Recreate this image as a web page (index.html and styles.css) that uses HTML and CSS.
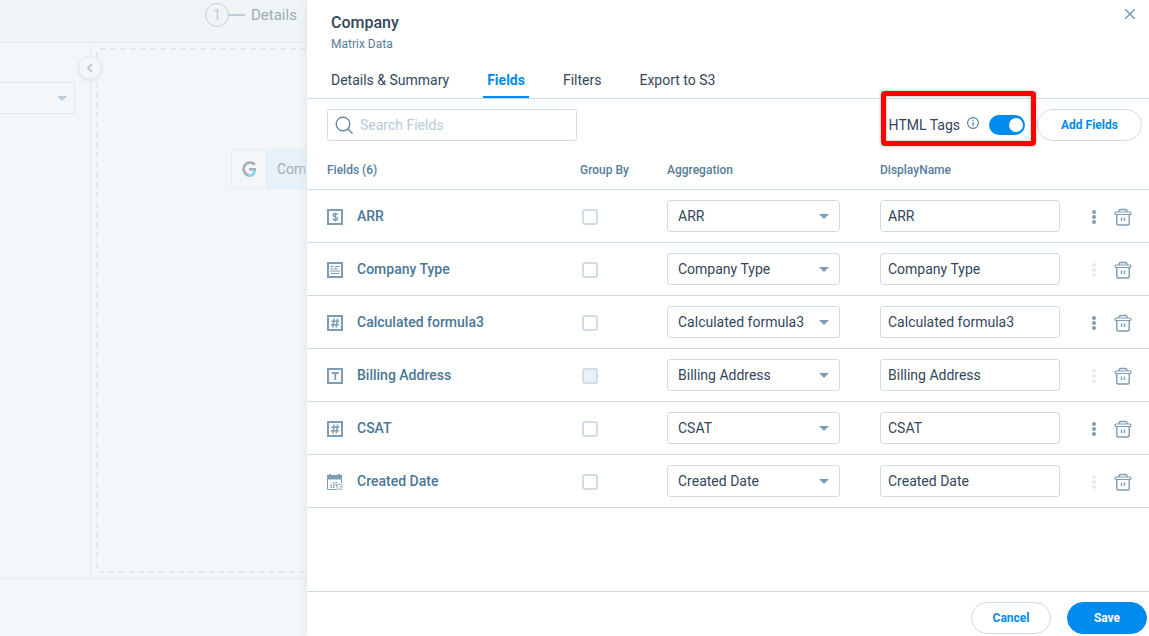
FILE: index.html
```
<!DOCTYPE html>
<html lang="en">
<head>
<meta charset="utf-8">
<meta name="viewport" content="width=device-width, initial-scale=1">
<title>Company – Matrix Data</title>
<link rel="stylesheet" href="styles.css">
</head>
<body>
<svg class="sprite" aria-hidden="true">
  <symbol id="i-frame" viewBox="0 0 16 16"><rect x="1" y="1" width="14" height="14" fill="none" stroke="currentColor" stroke-width="2"/></symbol>
  <symbol id="i-money" viewBox="0 0 16 16"><use href="#i-frame"/><path d="M10.4 6.2C10.2 5.2 9.400 4.700 8.300 4.700 7 4.700 6.100 5.300 6.100 6.300 6.100 8.500 10.600 7.300 10.600 9.600 10.600 10.700 9.600 11.300 8.300 11.300 7 11.300 6.100 10.700 6 9.600M8.300 3.400v9.200" fill="none" stroke="currentColor" stroke-width="1.400"/></symbol>
  <symbol id="i-list" viewBox="0 0 16 16"><use href="#i-frame"/><path d="M3.500 4.500h3M8 4.500h4.500M3.500 6.500h2M7 6.500h3M3.500 11.500h9" fill="none" stroke="currentColor" stroke-width="1"/><path d="M3 7.500h10v2.500H3z" fill="currentColor" opacity=".5"/></symbol>
  <symbol id="i-hash" viewBox="0 0 16 16"><use href="#i-frame"/><path d="M7.200 3.500l-1.400 9M10.600 3.500l-1.400 9M4.300 6.300h8M3.800 9.700h8" fill="none" stroke="currentColor" stroke-width="1.500"/></symbol>
  <symbol id="i-text" viewBox="0 0 16 16"><use href="#i-frame"/><path d="M4.800 5h7M8.300 5v7" fill="none" stroke="currentColor" stroke-width="1.800"/></symbol>
  <symbol id="i-date" viewBox="0 0 16 16"><path d="M0 1h2V0h2v1h7V0h2v1h2v4.500H0z" fill="currentColor"/><path d="M.5 4v11.500h9M14.500 4v5" fill="none" stroke="currentColor"/><path d="M6 8.700h1.500M8.500 8.700H10M3.500 11h1.500M6 11h1.500M8.500 11H10M3.500 13.300h1.500M6 13.300h1.500" stroke="currentColor" stroke-width="1.500"/><circle cx="12.500" cy="12.800" r="2.800" fill="#fff" stroke="currentColor" stroke-width=".9"/><path d="M12.300 13.500l1.500-1.500" fill="none" stroke="currentColor" stroke-width=".9"/></symbol>
  <symbol id="i-trash" viewBox="0 0 18 18"><path d="M4.500 4l1-1.800Q5.800 1.500 6.600 1.500h4.800q.8 0 1.100.7l1 1.800M2.800 6.500v9q0 1.500 1.500 1.500h9.400q1.500 0 1.500-1.500v-9M7.500 9.500v3.500M10.500 9.500v3.500" fill="none" stroke="currentColor" stroke-width="1.400"/><rect x="1" y="4" width="16" height="2.500" rx="1.200" fill="#fff" stroke="currentColor" stroke-width="1.200"/></symbol>
  <symbol id="i-dots" viewBox="0 0 4 14"><circle cx="2" cy="2" r="2" fill="currentColor"/><circle cx="2" cy="7" r="2" fill="currentColor"/><circle cx="2" cy="12" r="2" fill="currentColor"/></symbol>
  <symbol id="i-caret" viewBox="0 0 10 5"><path d="M0 0h10L5 5z" fill="currentColor"/></symbol>
</svg>

<div class="builder" aria-hidden="true">
  <div class="builder-head">
    <span class="step-number">1</span><span class="step-line"></span><span class="step-label">Details</span>
  </div>
  <div class="builder-body">
    <div class="side">
      <div class="side-select"><svg class="caret"><use href="#i-caret"/></svg></div>
      <span class="collapse"><svg width="6" height="10" viewBox="0 0 6 10"><path d="M5 1L1 5l4 4" fill="none" stroke="currentColor" stroke-width="1.800"/></svg></span>
    </div>
    <div class="canvas">
      <div class="node">
        <span class="node-logo"><svg width="18" height="18" viewBox="0 0 18 18"><path d="M14.800 4.600A6.500 6.500 0 1 0 9 15.500" fill="none" stroke="#a9b2b7" stroke-width="2.800"/><path d="M9 9.300h7" stroke="#a9b2b7" stroke-width="2.600"/><path d="M8 15.600c3.600.3 6.600-1 6.600-5.600" fill="none" stroke="#86d6f0" stroke-width="3"/></svg></span>
        <span class="node-name">Com</span>
      </div>
    </div>
  </div>
  <div class="builder-foot"></div>
</div>

<main class="drawer">
  <header class="drawer-head">
    <div>
      <h1 class="title">Company</h1>
      <p class="subtitle">Matrix Data</p>
    </div>
    <button class="icon-btn close" type="button" aria-label="Close"><svg width="10" height="10" viewBox="0 0 10 10"><path d="M0 0l10 10M10 0L0 10" stroke="currentColor" stroke-width="1.300"/></svg></button>
  </header>
  <nav class="tabs">
    <a class="tab" href="#details">Details &amp; Summary</a>
    <a class="tab tab-active" href="#fields" aria-current="page">Fields</a>
    <a class="tab" href="#filters">Filters</a>
    <a class="tab" href="#export">Export to S3</a>
  </nav>
  <div class="toolbar">
    <div class="search">
      <svg width="18" height="18" viewBox="0 0 18 18"><circle cx="8" cy="8" r="6.800" fill="none" stroke="currentColor" stroke-width="1.200"/><path d="M13 13l4.500 4.500" stroke="currentColor" stroke-width="1.300"/></svg>
      <input class="search-input" type="text" placeholder="Search Fields" aria-label="Search Fields">
    </div>
    <div class="toolbar-end">
      <div class="tags">
        <label for="html-tags">HTML Tags</label>
        <svg class="info" width="12" height="12" viewBox="0 0 12 12"><circle cx="6" cy="6" r="5.400" fill="none" stroke="currentColor" stroke-width="1.100"/><path d="M6 5v4M6 2.800v1.300" stroke="currentColor" stroke-width="1.200"/></svg>
        <input class="switch" id="html-tags" type="checkbox" role="switch" checked>
        <span class="highlight"></span>
      </div>
      <button class="btn btn-add" type="button">Add Fields</button>
    </div>
  </div>
  <div class="table-area">
  <table class="fields">
    <colgroup><col><col class="c-group"><col class="c-agg"><col class="c-display"><col class="c-actions"></colgroup>
    <thead><tr><th>Fields (6)</th><th>Group By</th><th>Aggregation</th><th>DisplayName</th><th aria-label="Actions"></th></tr></thead>
    <tbody>
      <tr>
        <td><span class="field"><svg class="type"><use href="#i-money"/></svg>ARR</span></td>
        <td><input class="check" type="checkbox" aria-label="Group by ARR"></td>
        <td><span class="pick"><select class="box" aria-label="Aggregation of ARR"><option>ARR</option></select><svg class="caret"><use href="#i-caret"/></svg></span></td>
        <td><input class="box name" type="text" value="ARR" aria-label="Display name of ARR"></td>
        <td><span class="actions"><button class="icon-btn" type="button" aria-label="More"><svg class="dots"><use href="#i-dots"/></svg></button><button class="icon-btn" type="button" aria-label="Delete"><svg class="trash"><use href="#i-trash"/></svg></button></span></td>
      </tr>
      <tr>
        <td><span class="field"><svg class="type"><use href="#i-list"/></svg>Company Type</span></td>
        <td><input class="check" type="checkbox" aria-label="Group by Company Type"></td>
        <td><span class="pick"><select class="box" aria-label="Aggregation of Company Type"><option>Company Type</option></select><svg class="caret"><use href="#i-caret"/></svg></span></td>
        <td><input class="box name" type="text" value="Company Type" aria-label="Display name of Company Type"></td>
        <td><span class="actions"><button class="icon-btn" type="button" aria-label="More" disabled><svg class="dots"><use href="#i-dots"/></svg></button><button class="icon-btn" type="button" aria-label="Delete"><svg class="trash"><use href="#i-trash"/></svg></button></span></td>
      </tr>
      <tr>
        <td><span class="field"><svg class="type"><use href="#i-hash"/></svg>Calculated formula3</span></td>
        <td><input class="check" type="checkbox" aria-label="Group by Calculated formula3"></td>
        <td><span class="pick"><select class="box" aria-label="Aggregation of Calculated formula3"><option>Calculated formula3</option></select><svg class="caret"><use href="#i-caret"/></svg></span></td>
        <td><input class="box name" type="text" value="Calculated formula3" aria-label="Display name of Calculated formula3"></td>
        <td><span class="actions"><button class="icon-btn" type="button" aria-label="More"><svg class="dots"><use href="#i-dots"/></svg></button><button class="icon-btn" type="button" aria-label="Delete"><svg class="trash"><use href="#i-trash"/></svg></button></span></td>
      </tr>
      <tr>
        <td><span class="field"><svg class="type"><use href="#i-text"/></svg>Billing Address</span></td>
        <td><input class="check" type="checkbox" aria-label="Group by Billing Address" disabled></td>
        <td><span class="pick"><select class="box" aria-label="Aggregation of Billing Address"><option>Billing Address</option></select><svg class="caret"><use href="#i-caret"/></svg></span></td>
        <td><input class="box name" type="text" value="Billing Address" aria-label="Display name of Billing Address"></td>
        <td><span class="actions"><button class="icon-btn" type="button" aria-label="More" disabled><svg class="dots"><use href="#i-dots"/></svg></button><button class="icon-btn" type="button" aria-label="Delete"><svg class="trash"><use href="#i-trash"/></svg></button></span></td>
      </tr>
      <tr>
        <td><span class="field"><svg class="type"><use href="#i-hash"/></svg>CSAT</span></td>
        <td><input class="check" type="checkbox" aria-label="Group by CSAT"></td>
        <td><span class="pick"><select class="box" aria-label="Aggregation of CSAT"><option>CSAT</option></select><svg class="caret"><use href="#i-caret"/></svg></span></td>
        <td><input class="box name" type="text" value="CSAT" aria-label="Display name of CSAT"></td>
        <td><span class="actions"><button class="icon-btn" type="button" aria-label="More"><svg class="dots"><use href="#i-dots"/></svg></button><button class="icon-btn" type="button" aria-label="Delete"><svg class="trash"><use href="#i-trash"/></svg></button></span></td>
      </tr>
      <tr>
        <td><span class="field"><svg class="type"><use href="#i-date"/></svg>Created Date</span></td>
        <td><input class="check" type="checkbox" aria-label="Group by Created Date"></td>
        <td><span class="pick"><select class="box" aria-label="Aggregation of Created Date"><option>Created Date</option></select><svg class="caret"><use href="#i-caret"/></svg></span></td>
        <td><input class="box name" type="text" value="Created Date" aria-label="Display name of Created Date"></td>
        <td><span class="actions"><button class="icon-btn" type="button" aria-label="More" disabled><svg class="dots"><use href="#i-dots"/></svg></button><button class="icon-btn" type="button" aria-label="Delete"><svg class="trash"><use href="#i-trash"/></svg></button></span></td>
      </tr>
    </tbody>
  </table>
  </div>
  <footer class="drawer-foot">
    <button class="btn" type="button">Cancel</button>
    <button class="btn btn-primary" type="button">Save</button>
  </footer>
</main>
</body>
</html>
```
FILE: styles.css
```
* { box-sizing: border-box; }

:root {
  --ink: #33475b;
  --muted: #557d9a;
  --icon: #7d9cb5;
  --line: #cfdde7;
  --blue: #018bef;
}

body {
  margin: 0;
  height: 100vh;
  position: relative;
  overflow: hidden;
  font: 14px/20px Roboto, sans-serif;
  color: var(--ink);
}

svg { display: block; flex: none; }
button, input, select { font: inherit; color: inherit; }
.sprite { position: absolute; width: 0; height: 0; }

/* Page behind the drawer */
.builder {
  height: 100%;
  display: flex;
  flex-direction: column;
  background: #f3f7fa;
  color: #9eacb5;
}
.builder-head {
  display: flex;
  align-items: center;
  height: 43px;
  padding: 0 0 12px 205px;
  background: #eff4f7;
  border-bottom: 1px solid #dfe7ed;
  font-size: 15px;
}
.step-number {
  width: 24px;
  height: 24px;
  border: 1px solid #c0ceda;
  border-radius: 50%;
  line-height: 22px;
  text-align: center;
  color: #c0ceda;
}
.step-line { width: 16px; height: 2px; background: #c0ceda; }
.step-label { margin-left: 6px; }
.builder-body {
  flex: 1;
  display: flex;
  border-bottom: 1px solid #e6ecf0;
}
.side {
  width: 91px;
  position: relative;
  padding-top: 39px;
  border-right: 1px solid #e6ecf0;
}
.side-select {
  display: flex;
  align-items: center;
  justify-content: flex-end;
  width: 75px;
  height: 32px;
  padding-right: 7px;
  border: 1px solid #dfe8ee;
  border-left: 0;
  border-radius: 0 3px 3px 0;
}
.collapse {
  position: absolute;
  top: 13px;
  right: -12px;
  z-index: 1;
  width: 24px;
  height: 24px;
  display: grid;
  place-items: center;
  border: 1px solid #e0e8ee;
  border-radius: 50%;
  background: #f3f7fa;
  box-shadow: 0 1px 3px #dfe7ed;
  color: #b9c8d4;
}
.side .caret { color: #b9cad8; }
.canvas {
  flex: 1;
  margin: 5px;
  padding: 99px 0 0 133px;
  border: 2px dashed #e1e9ef;
  border-radius: 4px;
}
.node {
  display: inline-flex;
  width: 180px;
  height: 40px;
  border: 1px solid #def0f8;
  border-radius: 4px;
}
.node-logo { width: 34px; display: grid; place-items: center; }
.node-name {
  flex: 1;
  padding: 0 10px;
  line-height: 38px;
  background: #e7f1f9;
  border-left: 1px solid #def0f8;
}
.builder-foot { height: 57px; }

/* Drawer */
.drawer {
  position: absolute;
  inset: 0 0 0 307px;
  display: flex;
  flex-direction: column;
  background: #fff;
  box-shadow: 0 0 10px #dbe4ea;
}
.drawer-head {
  display: flex;
  justify-content: space-between;
  align-items: flex-start;
  padding: 9px 14px 0 24px;
}
.title { margin: 4px 0 0; font-size: 16px; font-weight: 500; line-height: 20px; }
.subtitle { margin: 3px 0 0; font-size: 12px; line-height: 16px; color: var(--muted); }
.icon-btn { display: block; padding: 0; border: 0; background: none; color: var(--icon); }
.icon-btn:disabled { color: #e3ebf0; }
.close { color: #6796b8; }

.tabs {
  display: flex;
  gap: 30px;
  padding: 10px 20px 0;
  border-bottom: 1px solid var(--line);
}
.tab {
  height: 36px;
  padding: 8px 4px 0;
  border-bottom: 2px solid transparent;
  color: inherit;
  text-decoration: none;
}
.tab-active { border-color: var(--blue); color: var(--blue); font-weight: 700; }

.toolbar {
  display: flex;
  justify-content: space-between;
  padding: 10px 7px 9px 20px;
}
.search {
  display: flex;
  align-items: center;
  gap: 7px;
  width: 250px;
  height: 32px;
  padding: 0 7px;
  border: 1px solid var(--line);
  border-radius: 3px;
  color: var(--muted);
}
.search-input { width: 100%; padding: 0; border: 0; outline: 0; background: none; }
.search-input::placeholder { color: #b7cad8; opacity: 1; }
.toolbar-end { display: flex; align-items: center; gap: 12px; }
.tags { position: relative; display: flex; align-items: center; gap: 7px; }
.tags label { padding-bottom: 1px; }
.info { margin-bottom: 4px; color: var(--muted); }
.highlight {
  position: absolute;
  inset: -24px -11px -10px -8px;
  border: 5px solid #fe0000;
  border-radius: 4px;
  box-shadow: 0 0 3px #aaa, inset 0 0 3px #aaa;
  pointer-events: none;
}
.switch {
  appearance: none;
  width: 36px;
  height: 20px;
  margin: 0 0 0 3px;
  padding: 3px 2px;
  border-radius: 10px;
  background: var(--blue);
}
.switch::before {
  content: "";
  display: block;
  width: 14px;
  height: 14px;
  margin-left: auto;
  border-radius: 50%;
  background: #fff;
}

.btn {
  min-width: 80px;
  height: 32px;
  padding: 0 20px;
  border: 1px solid var(--line);
  border-radius: 16px;
  background: #fff;
  color: var(--blue);
  font-size: 12px;
  font-weight: 700;
}
.btn-add { min-width: 105px; }
.btn-primary { border-color: var(--blue); background: var(--blue); color: #fff; }

/* Field list */
.table-area { flex: 1; }
.fields { width: 100%; table-layout: fixed; border-collapse: separate; border-spacing: 0; }
.c-group { width: 87px; }
.c-agg { width: 213px; }
.c-display { width: 202px; }
.c-actions { width: 67px; }
.fields th {
  height: 40px;
  padding: 0;
  border-bottom: 1px solid var(--line);
  text-align: left;
  font-size: 12px;
  font-weight: 500;
  color: var(--muted);
}
.fields td { height: 53px; padding: 0; border-bottom: 1px solid var(--line); }
.fields th:first-child, .fields td:first-child { padding-left: 20px; }
.field { display: flex; align-items: center; gap: 14px; font-weight: 500; color: #4a7797; }
.type { width: 16px; height: 16px; margin-top: 2px; color: var(--icon); }
.check {
  appearance: none;
  display: block;
  width: 16px;
  height: 16px;
  margin: 2px 2px 0;
  border: 2px solid var(--line);
  border-radius: 3px;
  background: #fff;
}
.check:disabled { background: #eaf1f5; }
.pick { position: relative; display: block; width: 173px; }
.box {
  appearance: none;
  display: block;
  width: 100%;
  height: 32px;
  padding: 0 10px;
  border: 1px solid var(--line);
  border-radius: 3px;
  outline: 0;
  background: #fff;
}
.name { width: 180px; padding: 0 7px; }
.caret { width: 10px; height: 5px; color: var(--icon); }
.pick .caret { position: absolute; right: 11px; top: 14px; pointer-events: none; }
.actions { display: flex; align-items: center; gap: 18px; padding: 2px 0 0 10px; }
.dots { width: 4px; height: 14px; }
.trash { width: 18px; height: 18px; }

.drawer-foot {
  display: flex;
  justify-content: flex-end;
  gap: 16px;
  padding: 10px 2px 2px;
  border-top: 1px solid var(--line);
}
```
